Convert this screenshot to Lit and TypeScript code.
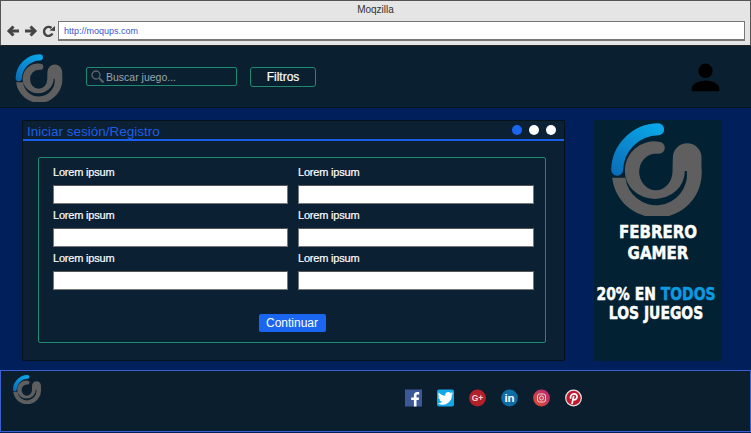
import { LitElement, html, css, svg } from 'lit';
import { customElement } from 'lit/decorators.js';

// the swirl logo, used three times at different sizes
const logo = (id: string) => svg`
  <svg class="logo-svg" viewBox="70 20 290 285">
    <defs>
      <linearGradient id=${id} gradientUnits="userSpaceOnUse" x1="200" y1="30" x2="90" y2="190">
        <stop offset="0" stop-color="#0aa5e6"></stop>
        <stop offset="1" stop-color="#0b6bb8"></stop>
      </linearGradient>
    </defs>
    <path fill="#5f5f5f" d="M82 190A133 133 0 0 0 350 160L350 130A43 43 0 0 0 264 130L263 172A50 56 0 0 1 163 172A50 54 0 0 1 213 118L222 118A18 18 0 0 0 222 82A88 88 0 0 0 120 170A90 84 0 0 0 300 170L306 170A91 91 0 0 1 122 190Z"></path>
    <path fill="none" stroke=${`url(#${id})`} stroke-width="36" stroke-linecap="round" d="M220 45A125 125 0 0 0 97 166"></path>
  </svg>
`;

@customElement('app-root')
class AppRoot extends LitElement {
  static styles = css`
    :host {
      display: block;
      width: 751px;
      height: 433px;
      overflow: hidden;
      background-color: #001f5b;
      font-family: 'Liberation Sans', Arial, sans-serif;
    }

    /* fake browser window */
    .chrome {
      box-sizing: border-box;
      height: 46px;
      background-color: #e5e5e5;
      border: 1px solid #555;
      border-bottom-color: #222;
    }
    .chrome-title {
      height: 20px;
      line-height: 17px;
      text-align: center;
      font-size: 10px;
      color: #333;
    }
    .chrome-bar {
      display: flex;
      align-items: center;
      height: 20px;
      padding-left: 5px;
      gap: 4px;
    }
    .nav-icon {
      display: block;
      flex: none;
    }
    .url {
      box-sizing: border-box;
      width: 687px;
      margin-left: -1px;
      height: 20px;
      line-height: 18px;
      padding-left: 5px;
      background-color: #fff;
      border: 1px solid #777;
      border-bottom-width: 2px;
      font-size: 9px;
      color: #3a55d0;
    }

    .header {
      box-sizing: border-box;
      display: flex;
      align-items: center;
      height: 62px;
      background-color: #0a2030;
      border-bottom: 1px solid #05121c;
      padding-left: 14px;
    }
    .header-logo {
      width: 50px;
      height: 49px;
      margin-top: 1px;
    }
    .logo-svg {
      display: block;
      width: 100%;
      height: 100%;
    }
    .search {
      box-sizing: border-box;
      display: flex;
      align-items: center;
      width: 151px;
      height: 19px;
      margin-left: 22px;
      padding-left: 4px;
      gap: 2px;
      border: 1px solid #1f8a70;
      border-radius: 2px;
      font-size: 10.5px;
      color: #9aa5ad;
    }
    .filters {
      box-sizing: border-box;
      width: 66px;
      height: 20px;
      margin-left: 13px;
      line-height: 18px;
      text-align: center;
      border: 1px solid #1f8a70;
      border-radius: 3px;
      font-size: 12px;
      color: #fff;
      -webkit-text-stroke: 0.2px #fff;
    }
    .user {
      display: block;
      width: 30px;
      height: 30px;
      margin-left: auto;
      margin-right: 30px;
    }

    .main {
      box-sizing: border-box;
      display: flex;
      align-items: flex-start;
      height: 262px;
      padding: 12px 0 0 22px;
      gap: 29px;
    }
    .panel {
      box-sizing: border-box;
      width: 543px;
      height: 241px;
      background-color: #0b2033;
      border: 1px solid #05121c;
      border-radius: 1px;
    }
    .panel-head {
      display: flex;
      align-items: center;
      justify-content: space-between;
      height: 18px;
      padding: 0 8px 0 4px;
      border-bottom: 2px solid #1a5fe8;
      font-size: 13.5px;
      color: #1a5fe8;
    }
    .panel-head span {
      padding-top: 2px;
    }
    .dots {
      display: flex;
      gap: 7px;
    }
    .dot {
      width: 10px;
      height: 10px;
      border-radius: 50%;
      background-color: #fff;
    }
    .dot.active {
      background-color: #1a66f0;
    }

    .form {
      box-sizing: border-box;
      width: 508px;
      height: 186px;
      margin: 16px 0 0 15px;
      padding: 7px 0 0 14px;
      border: 1px solid #1f8a70;
      border-radius: 2px;
    }
    .fields {
      display: grid;
      grid-template-columns: 235px 236px;
      column-gap: 10px;
      row-gap: 4px;
    }
    .field label {
      display: block;
      height: 14px;
      line-height: 14px;
      margin-bottom: 6px;
      font-size: 11px;
      letter-spacing: -0.2px;
      color: #fff;
      -webkit-text-stroke: 0.2px #fff;
    }
    .input {
      box-sizing: border-box;
      height: 19px;
      background-color: #fff;
      border: 1px solid #777;
      border-top-color: #555;
    }
    .actions {
      display: flex;
      justify-content: center;
      margin-top: 24px;
      padding-right: 14px;
    }
    .continue {
      width: 67px;
      height: 18px;
      line-height: 18px;
      text-align: center;
      background-color: #1a66f0;
      border-radius: 2px;
      font-size: 12px;
      color: #fff;
    }

    .ad {
      box-sizing: border-box;
      width: 128px;
      height: 241px;
      padding-top: 1px;
      background-color: #022233;
    }
    .ad-logo {
      width: 97px;
      height: 95px;
      margin-left: 14px;
    }
    .ad-text {
      display: grid;
      grid-template-columns: 100%;
      justify-items: center;
      font-family: 'DejaVu Sans', sans-serif;
      font-weight: 700;
      font-size: 18px;
      color: #fff;
      -webkit-text-stroke: 0.5px;
    }
    .ad-text div {
      white-space: nowrap;
    }
    .ad-title {
      margin-top: 5px;
      line-height: 21px;
      transform: scaleX(0.835);
    }
    .ad-offer {
      margin-top: 21px;
      line-height: 19px;
      transform: translateX(-2px) scaleX(0.774);
    }
    .ad-offer b {
      color: #0a9be0;
    }

    .footer {
      box-sizing: border-box;
      display: flex;
      align-items: flex-start;
      height: 62px;
      background-color: #0a1e2e;
      border: 1px solid #3a5fd0;
      padding: 3px 0 0 11px;
    }
    .footer-logo {
      width: 30px;
      height: 30px;
    }
    .socials {
      display: flex;
      align-items: center;
      gap: 15px;
      margin: 15px 0 0 363px;
    }
    .social {
      display: block;
      width: 17px;
      height: 18px;
    }
  `;

  render() {
    return html`
      <div class="chrome">
        <div class="chrome-title">Moqzilla</div>
        <div class="chrome-bar">
          <svg class="nav-icon" width="14" height="14" viewBox="0 0 14 14"><path fill="none" stroke="#444" stroke-width="3" d="M13 7H4M7.500 2.500 3 7l4.500 4.500"></path></svg>
          <svg class="nav-icon" width="14" height="14" viewBox="0 0 14 14"><path fill="none" stroke="#444" stroke-width="3" d="M1 7h9M6.500 2.500 11 7l-4.500 4.500"></path></svg>
          <svg class="nav-icon" width="13" height="13" viewBox="0 0 13 13"><path fill="none" stroke="#444" stroke-width="2.400" d="M10.500 8.500A4.500 4.500 0 1 1 9.500 3"></path><path fill="#444" d="M7.500 5.500 13 6V1z"></path></svg>
          <div class="url">http://moqups.com</div>
        </div>
      </div>

      <div class="header">
        <div class="header-logo">${logo('grad-head')}</div>
        <div class="search">
          <svg width="13" height="13" viewBox="0 0 13 13"><circle cx="5" cy="5" r="4" fill="none" stroke="#5c6468" stroke-width="1.300"></circle><path stroke="#5c6468" stroke-width="2" d="M8 8l4.500 4.500"></path></svg>
          Buscar juego...
        </div>
        <div class="filters">Filtros</div>
        <svg class="user" viewBox="0 0 30 30"><circle cx="14.500" cy="8.800" r="7.200"></circle><path d="M.7 29.200v-3C.7 21.500 9 18.500 14.500 18.500S28.300 21.500 28.300 26.200v3z"></path></svg>
      </div>

      <div class="main">
        <div class="panel">
          <div class="panel-head">
            <span>Iniciar sesión/Registro</span>
            <div class="dots">
              <div class="dot active"></div>
              <div class="dot"></div>
              <div class="dot"></div>
            </div>
          </div>
          <div class="form">
            <div class="fields">
              ${[1, 2, 3, 4, 5, 6].map(
                () => html`<div class="field"><label>Lorem ipsum</label><div class="input"></div></div>`
              )}
            </div>
            <div class="actions"><div class="continue">Continuar</div></div>
          </div>
        </div>
        <div class="ad">
          <div class="ad-logo">${logo('grad-ad')}</div>
          <div class="ad-text ad-title">
            <div>FEBRERO</div>
            <div>GAMER</div>
          </div>
          <div class="ad-text ad-offer">
            <div>20% EN <b>TODOS</b></div>
            <div>LOS JUEGOS</div>
          </div>
        </div>
      </div>

      <div class="footer">
        <div class="footer-logo">${logo('grad-foot')}</div>
        <div class="socials">
          <svg class="social" viewBox="0 0 17 18">
            <rect y="0.500" width="17" height="17" fill="#3b5998"></rect>
            <path fill="#fff" d="M11.500 17.500V11h2.200l.4-2.600h-2.600V6.800c0-.8.300-1.300 1.300-1.300h1.400V3.200c-.3 0-1.100-.1-2-.1-2 0-3.300 1.200-3.300 3.400v1.900H6.200V11h2.700v6.500z"></path>
          </svg>
          <svg class="social" viewBox="0 0 17 18">
            <rect y="0.500" width="17" height="17" rx="2" fill="#12a9e6"></rect>
            <path fill="#fff" d="M16 4.300c-.6.300-1.200.4-1.800.5.600-.4 1.100-1 1.400-1.700-.6.400-1.300.6-2 .8a3.200 3.200 0 0 0-5.400 2.900C5.600 6.700 3.300 5.400 1.700 3.500c-.8 1.500-.4 3.300 1 4.300-.5 0-1-.2-1.400-.4 0 1.600 1.100 2.900 2.600 3.200-.5.100-1 .1-1.500 0 .4 1.300 1.600 2.200 3 2.200A6.500 6.500 0 0 1 .8 14.200 9.100 9.100 0 0 0 14.800 6.100c.5-.5 1-1.100 1.200-1.800z"></path>
          </svg>
          <svg class="social" viewBox="0 0 17 18">
            <circle cx="8.500" cy="9" r="8.400" fill="#b3202a"></circle>
            <text x="8.500" y="12" text-anchor="middle" font-size="8.500" font-weight="700" fill="#f3d5d5">G+</text>
          </svg>
          <svg class="social" viewBox="0 0 17 18">
            <circle cx="8.500" cy="9" r="8.400" fill="#0f6da6"></circle>
            <text x="8.500" y="13" text-anchor="middle" font-size="11.500" font-weight="700" fill="#fff">in</text>
          </svg>
          <svg class="social" viewBox="0 0 17 18">
            <defs>
              <linearGradient id="insta" x1="0" y1="1" x2="1" y2="0">
                <stop offset="0" stop-color="#e0502a"></stop>
                <stop offset="1" stop-color="#b5257a"></stop>
              </linearGradient>
            </defs>
            <circle cx="8.500" cy="9" r="8.400" fill="url(#insta)"></circle>
            <rect x="4.500" y="5" width="8" height="8" rx="2" fill="none" stroke="#f5d5d5" stroke-width="1"></rect>
            <circle cx="8.500" cy="9" r="2" fill="none" stroke="#f5d5d5" stroke-width="1"></circle>
          </svg>
          <svg class="social" viewBox="0 0 17 18">
            <circle cx="8.500" cy="9" r="7.800" fill="#c0182c" stroke="#e6e6e6" stroke-width="1.200"></circle>
            <path fill="none" stroke="#fff" stroke-width="1.700" d="M5.800 9.800C4.800 7.200 6.600 4.900 9 4.900c2.200 0 3.300 1.500 3 3.300-.3 1.800-1.800 3-3.200 2.300M8.700 6.800 7 15"></path>
          </svg>
        </div>
      </div>
    `;
  }
}
